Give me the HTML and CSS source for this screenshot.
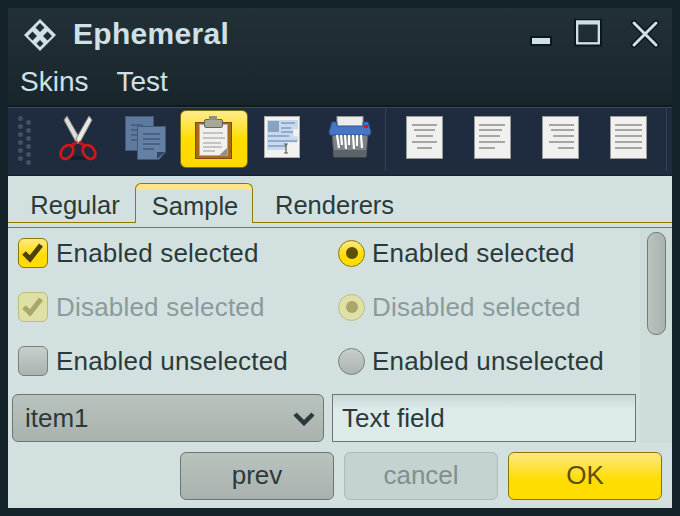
FILE: index.html
```html
<!DOCTYPE html>
<html lang="en">
<head>
<meta charset="utf-8">
<title>Ephemeral</title>
<link rel="stylesheet" href="styles.css">
</head>
<body>
<div class="window">
  <header class="titlebar">
    <svg class="logo" width="32" height="32" viewBox="0 0 32 32">
      <path fill-rule="evenodd" fill="#cfe0e6" d="M16 0 32 16 16 32 0 16ZM16 4 11.500 8.500 16 13 20.500 8.500ZM8.500 12.500 4 17 8.500 21.500 13 17ZM23.500 12.500 19 17 23.500 21.500 28 17ZM16 21 12.500 24.500 16 28 19.500 24.500Z"/>
    </svg>
    <span class="title">Ephemeral</span>
    <div class="controls">
      <svg class="ctl-min" width="22" height="10" viewBox="0 0 22 10"><rect x="1" y="1" width="20" height="8" fill="#cfe0e6" stroke="#0c171b" stroke-width="2"/></svg>
      <svg class="ctl-max" width="30" height="30" viewBox="0 0 30 30"><rect x="3.500" y="2" width="23" height="23" fill="none" stroke="#0c171b" stroke-width="5"/><path d="M3 3.500H27" stroke="#cfe0e6" stroke-width="4"/><rect x="4.200" y="2.700" width="21.600" height="21.600" fill="none" stroke="#cfe0e6" stroke-width="2.400"/></svg>
      <svg class="ctl-close" width="30" height="30" viewBox="0 0 30 30"><path d="M4 4 26 26M26 4 4 26" stroke="#0c171b" stroke-width="6" stroke-linecap="round"/><path d="M4 4 26 26M26 4 4 26" stroke="#cfe0e6" stroke-width="3" stroke-linecap="round"/></svg>
    </div>
  </header>
  <nav class="menubar"><span>Skins</span><span>Test</span></nav>
  <div class="toolbar">
    <div class="grip"><i></i><i></i><i></i><i></i><i></i><i></i><i></i><i></i><i></i><i></i><i></i><i></i></div>
    <div class="tool">
      <svg width="44" height="50" viewBox="0 0 44 50">
        <ellipse cx="22" cy="44" rx="13" ry="2" fill="#15202e"/>
        <path d="M8 6 11 2 24 25 21 30Z" fill="#dcdcd8" stroke="#8a8a86"/>
        <path d="M36 6 33 2 20 25 23 30Z" fill="#e8e8e4" stroke="#8a8a86"/>
        <path d="M21 28 15 32M23 28 29 32" stroke="#c81616" stroke-width="3"/>
        <ellipse cx="11" cy="38" rx="5.500" ry="7.500" transform="rotate(38 11 38)" fill="#1f2c40" stroke="#d01818" stroke-width="2.800"/>
        <ellipse cx="33" cy="38" rx="5.500" ry="7.500" transform="rotate(-38 33 38)" fill="#1f2c40" stroke="#d01818" stroke-width="2.800"/>
      </svg>
    </div>
    <div class="tool">
      <svg width="44" height="50" viewBox="0 0 44 50">
        <rect x="1.500" y="2.500" width="28" height="34" fill="#5f7a9e" stroke="#42597a"/>
        <path d="M7 11H19M7 16H19M7 21H19M7 26H19" stroke="#46597a" stroke-width="1.600"/>
        <path d="M13.500 12.500H41.500V38L35 45.500H13.500Z" fill="#6480a4" stroke="#42597a"/>
        <path d="M19 20H36M19 25H36M19 30H36M19 35H30" stroke="#43567a" stroke-width="1.600"/>
        <path d="M33 45 33 38H41Z" fill="#33465f"/>
      </svg>
    </div>
    <div class="tool tool-active">
      <svg width="44" height="50" viewBox="0 0 44 50">
        <rect x="3.500" y="8.500" width="36" height="36" fill="#a9691c" stroke="#7b4c14"/>
        <rect x="7.500" y="10.500" width="28" height="31" fill="#f0f0ee" stroke="#aaa"/>
        <rect x="12.500" y="5.500" width="18" height="8" rx="1.500" fill="#a8a898" stroke="#66665c"/>
        <rect x="17" y="2" width="8" height="4" fill="#8f8f82"/>
        <path d="M11 19H31M11 24H33M11 29H29M11 33H30M11 37H23" stroke="#c4c4c0" stroke-width="1.800"/>
        <path d="M27 41.500H35V34Z" fill="#8f8f8a"/>
      </svg>
    </div>
    <div class="tool">
      <svg width="44" height="50" viewBox="0 0 44 50">
        <rect x="4.500" y="2.500" width="35" height="41" fill="#f2f2f0" stroke="#aaa"/>
        <rect x="7" y="6" width="31" height="30" fill="#c9d8ea" clip-path="polygon(0 0,100% 0,100% 30%,85% 30%,85% 55%,100% 55%,100% 75%,60% 75%,60% 100%,0 100%)"/>
        <rect x="8" y="7" width="11" height="11" fill="#88a2c2"/>
        <path d="M21 9H35M21 14H31M21 18H33M8 22H29M8 27H37M8 32H27" stroke="#8fabcf" stroke-width="2"/>
        <path d="M26 30V39M24 30H28M24 39H28" stroke="#555" stroke-width="1.200"/>
      </svg>
    </div>
    <div class="tool">
      <svg width="44" height="50" viewBox="0 0 44 50">
        <path d="M4 19 40 19 38 43H6Z" fill="#7c8286" stroke="#555b5f"/>
        <rect x="6" y="36" width="32" height="7" fill="#5d6468"/>
        <rect x="9" y="2.500" width="26" height="11" fill="#ececea" stroke="#999"/>
        <path d="M4 8H9V12H35V8H40L43 18 42 21H2L1 18Z" fill="#4777c4" stroke="#2f5594"/>
        <rect x="36" y="11" width="4" height="3" fill="#e0161b"/>
        <path d="M9 21 11 34M13 21 14 31M17 21 18 35M21 21 21 31M25 21 26 35M29 21 29 32M33 21 34 34" stroke="#fff" stroke-width="2.200"/>
      </svg>
    </div>
    <div class="sep"></div>
    <div class="tool">
      <svg width="44" height="50" viewBox="0 0 44 50"><rect x="3.500" y="2.500" width="36" height="42" class="sheet"/><path d="M9 11H34M11 16H32M13 22H30M9 28H34M14 34H29" class="lines"/></svg>
    </div>
    <div class="tool">
      <svg width="44" height="50" viewBox="0 0 44 50"><rect x="3.500" y="2.500" width="36" height="42" class="sheet"/><path d="M8 11H34M8 16H31M8 22H29M8 28H34M8 34H24" class="lines"/></svg>
    </div>
    <div class="tool">
      <svg width="44" height="50" viewBox="0 0 44 50"><rect x="3.500" y="2.500" width="36" height="42" class="sheet"/><path d="M10 11H35M12 16H35M14 22H35M10 28H35M19 34H35" class="lines"/></svg>
    </div>
    <div class="tool">
      <svg width="44" height="50" viewBox="0 0 44 50"><rect x="3.500" y="2.500" width="36" height="42" class="sheet"/><path d="M8 11H35M8 16H35M8 22H35M8 28H35M8 34H35" class="lines"/></svg>
    </div>
    <div class="sep"></div>
  </div>
  <main class="content">
    <div class="tabs">
      <span class="tab tab-first">Regular</span>
      <span class="tab tab-active">Sample</span>
      <span class="tab tab-last">Renderers</span>
    </div>
    <div class="pane">
      <div class="view">
        <div class="choices">
          <label class="choice"><span class="check on"><svg width="24" height="22" viewBox="0 0 24 22"><path d="M3 11 9 17 20 3" class="tick"/></svg></span>Enabled selected</label>
          <label class="choice radio-col"><span class="radio on"><i></i></span>Enabled selected</label>
          <label class="choice off"><span class="check on"><svg width="24" height="22" viewBox="0 0 24 22"><path d="M3 11 9 17 20 3" class="tick"/></svg></span>Disabled selected</label>
          <label class="choice off radio-col"><span class="radio on"><i></i></span>Disabled selected</label>
          <label class="choice"><span class="check"></span>Enabled unselected</label>
          <label class="choice radio-col"><span class="radio"></span>Enabled unselected</label>
        </div>
        <div class="fields">
          <div class="combo"><span>item1</span><svg width="22" height="15" viewBox="0 0 22 15"><path d="M2 3 11 12 20 3" fill="none" stroke="#2b3a3a" stroke-width="4.500"/></svg></div>
          <div class="textfield">Text field</div>
        </div>
      </div>
      <div class="scrollbar"><div class="thumb"></div></div>
    </div>
    <div class="actions">
      <button class="btn">prev</button>
      <button class="btn btn-off">cancel</button>
      <button class="btn btn-ok">OK</button>
    </div>
  </main>
</div>
</body>
</html>
```
FILE: styles.css
```css
* { box-sizing: border-box; }
html, body { margin: 0; height: 100%; }
body {
  background: #14232a;
  padding: 8px;
  font-family: "Liberation Sans", sans-serif;
  font-size: 26px;
  color: #2a3a3a;
  overflow: hidden;
}
.window { width: 664px; height: 500px; display: flex; flex-direction: column; }
.titlebar {
  height: 55px;
  display: flex;
  align-items: center;
  padding: 0 12px 4px 16px;
  background: linear-gradient(#223137, #1d2b31);
  color: #cfe0e6;
}
.logo { flex: none; margin-top: 2px; }
.title { margin-left: 17px; font-size: 30px; font-weight: bold; letter-spacing: 0.3px; }
.controls { margin-left: auto; display: flex; align-items: flex-end; }
.ctl-min { margin-right: 21px; margin-bottom: 3px; }
.ctl-max { margin-right: 27px; }
.menubar {
  height: 44px;
  display: flex;
  gap: 28px;
  padding: 0 12px 4px;
  align-items: center;
  background: linear-gradient(#1d2b31, #18262c);
  color: #cfe0e6;
  border-bottom: 2px solid #0f191e;
  font-size: 28px;
}
.toolbar {
  height: 69px;
  display: flex;
  align-items: center;
  padding: 0 0 5px 10px;
  background: #1f2c40;
  border-top: 1px solid #3a4a5c;
  border-bottom: 1px solid #142029;
}
.grip {
  width: 26px;
  display: grid;
  grid-template-columns: 8px 8px;
  grid-auto-rows: 4px;
  row-gap: 4px;
  height: 46px;
}
.grip i { width: 5px; height: 5px; border-radius: 50%; background: #414f64; }
.grip i:nth-child(even) { transform: translateY(4px); }
.tool { width: 68px; height: 58px; flex: none; display: flex; align-items: center; justify-content: center; border: 1px solid transparent; border-radius: 6px; }
.tool-active { background: linear-gradient(#ffeb8e, #ffdd00 50%, #fcd800); border-color: #7b6b10; }
.sep { width: 1px; height: 64px; margin: 0 5px 0 1px; background: #33435a; flex: none; }
.sep:last-child { margin-left: 3px; }
.sheet { fill: #f0f0ee; stroke: #9a9a98; }
.lines { stroke: #a5a5a3; stroke-width: 1.800; fill: none; }
.content { flex: 1; min-height: 0; background: #d2e1df; display: flex; flex-direction: column; }
.tabs {
  height: 47px;
  padding: 7px 0 0 0;
  display: flex;
  align-items: flex-end;
  border-bottom: 1px solid #8f7a00;
  font-size: 25.500px;
}
.tab { height: 39px; display: flex; align-items: center; padding: 6px 16px 0; width: 127px; justify-content: center; }
.tab-first { padding-left: 23px; padding-right: 16px; }
.tab-last { width: auto; padding-left: 22px; }
.tab-active {
  width: 118px;
  padding: 6px 14px 0 16px;
  border: 1px solid #8f7a00;
  border-bottom: 0;
  border-radius: 6px 6px 0 0;
  background: linear-gradient(#fde585 6px, #d2e1df 6px);
  margin-bottom: -1px;
  height: 40px;
}
.pane { height: 216px; display: flex; margin-top: 4px; border-top: 1px solid #8f7a00; }
.view { flex: 1; min-width: 0; }
.choices { display: grid; grid-template-columns: 320px 1fr; grid-auto-rows: 54px; padding-left: 10px; margin-top: -2px; }
.choice { display: flex; align-items: center; gap: 8px; letter-spacing: 0.2px; }
.radio-col { gap: 7px; }
.off { color: #8b9a9a; }
.check { width: 30px; height: 30px; border: 1px solid #7b7f7d; border-radius: 6px; background: linear-gradient(#c6cfcc, #a9b3af); display: flex; align-items: center; justify-content: center; flex: none; }
.check.on { background: linear-gradient(#ffe883, #ffdd00 60%); border-color: #8a7608; }
.tick { fill: none; stroke: #4a410c; stroke-width: 5; }
.off .check.on { background: #dee0a6; border-color: #bdbc7f; }
.off .tick { stroke: #aaa56a; }
.radio { width: 27px; height: 27px; border-radius: 50%; border: 1px solid #7b7f7d; background: linear-gradient(#c6cfcc, #a9b3af); flex: none; display: flex; align-items: center; justify-content: center; }
.radio.on { background: linear-gradient(#ffe883, #ffdd00 60%); border-color: #8a7608; }
.radio i { width: 12px; height: 12px; border-radius: 50%; background: #5b4f08; }
.off .radio.on { background: #dee0a6; border-color: #bdbc7f; }
.off .radio i { background: #aaa56a; }
.fields { display: flex; gap: 8px; padding-left: 4px; margin-top: 6px; }
.combo {
  width: 312px; height: 48px; border: 1px solid #6d7472; border-radius: 6px;
  background: linear-gradient(#b9c3be, #a9b2ae);
  display: flex; align-items: center; justify-content: space-between;
  padding: 0 8px 0 12px;
}
.textfield {
  width: 304px; height: 48px; border: 1px solid #6d7472;
  background: linear-gradient(#c8d6d4, #dcebe9 30%);
  display: flex; align-items: center; padding-left: 9px;
}
.scrollbar { width: 32px; flex: none; background: #cddbd9; padding: 4px 6px 0 7px; }
.thumb { height: 103px; border: 1px solid #737b79; border-radius: 9px; background: linear-gradient(90deg, #b9c3be, #a9b2ae); }
.actions { flex: 1; display: flex; justify-content: flex-end; gap: 10px; padding: 9px 10px 8px 0; }
.btn {
  width: 154px; height: 48px; font: inherit; color: #2a3a3a; border: 1px solid #6d7472; border-radius: 6px;
  background: linear-gradient(#b9c3be, #a9b2ae);
  padding: 0 0 2px;
}
.btn-off { color: #7f8f8f; background: #c4d2d0; border-color: #aebbb9; }
.btn-ok { color: #5b4f08; background: linear-gradient(#ffe883, #ffdd00 60%); border-color: #8a7608; }
```
